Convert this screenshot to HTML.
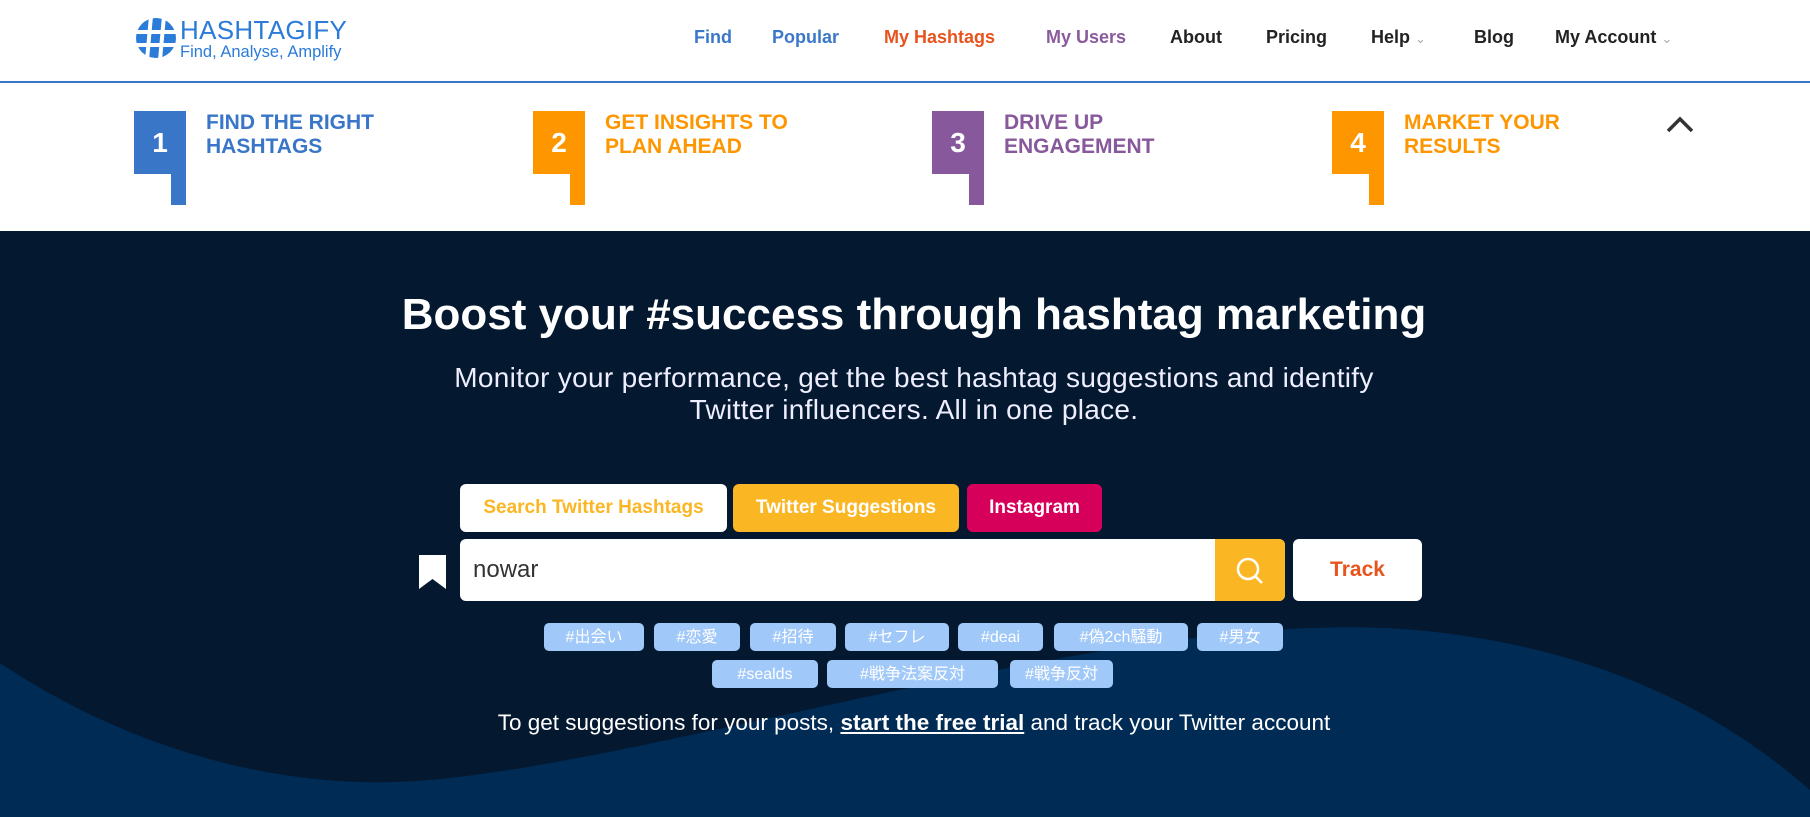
<!DOCTYPE html>
<html><head><meta charset="utf-8"><style>
*{margin:0;padding:0;box-sizing:border-box}
body{width:1810px;height:817px;overflow:hidden;font-family:"Liberation Sans","Noto Sans CJK JP",sans-serif;background:#fff;position:relative}
.a{position:absolute}
.nav{top:27px;font-size:18px;font-weight:bold;color:#222;white-space:nowrap}
.hdr{top:0;left:0;width:1810px;height:83px;border-bottom:2px solid #3a76c8}
.step{top:111px;width:52px;height:63px;color:#fff;font-weight:bold;font-size:28px;text-align:center;line-height:63px}
.tail{top:174px;width:15px;height:31px}
.st{top:111px;font-size:21px;font-weight:bold;line-height:24px}
.hero{top:231px;left:0;width:1810px;height:586px;background:#04182f;overflow:hidden}
.tag{height:28px;background:#a0c8f8;border-radius:5px;color:#fff;font-size:16px;line-height:29px;text-align:center}
</style></head><body>
<div class="a hdr"></div>
<svg class="a" style="left:134px;top:16px" width="44" height="44" viewBox="0 0 44 44">
<circle cx="22" cy="22" r="20" fill="#2b7bd8"/>
<g stroke="#fff" stroke-width="4"><line x1="17" y1="0" x2="13" y2="44"/><line x1="30" y1="0" x2="26" y2="44"/><line x1="0" y1="16" x2="44" y2="16"/><line x1="0" y1="29" x2="44" y2="29"/></g></svg>
<div class="a" style="left:180px;top:15px;font-size:26px;color:#2b7bd8;letter-spacing:0.3px">HASHTAGIFY</div>
<div class="a" style="left:180px;top:43px;font-size:16.5px;color:#2b7bd8">Find, Analyse, Amplify</div>
<div class="a nav" style="left:694px;color:#3b78c9">Find</div>
<div class="a nav" style="left:772px;color:#3b78c9">Popular</div>
<div class="a nav" style="left:884px;color:#e8541e">My Hashtags</div>
<div class="a nav" style="left:1046px;color:#8a5a9c">My Users</div>
<div class="a nav" style="left:1170px">About</div>
<div class="a nav" style="left:1266px">Pricing</div>
<div class="a nav" style="left:1371px">Help <span style="color:#aaa;font-weight:normal;font-size:13px">&#8964;</span></div>
<div class="a nav" style="left:1474px">Blog</div>
<div class="a nav" style="left:1555px">My Account <span style="color:#aaa;font-weight:normal;font-size:13px">&#8964;</span></div>

<div class="a step" style="left:134px;background:#3a76c8">1</div><div class="a tail" style="left:171px;background:#3a76c8"></div>
<div class="a st" style="left:206px;color:#3a76c8">FIND THE RIGHT<br>HASHTAGS</div>
<div class="a step" style="left:533px;background:#fe9600">2</div><div class="a tail" style="left:570px;background:#fe9600"></div>
<div class="a st" style="left:605px;color:#fe9600">GET INSIGHTS TO<br>PLAN AHEAD</div>
<div class="a step" style="left:932px;background:#87589b">3</div><div class="a tail" style="left:969px;background:#87589b"></div>
<div class="a st" style="left:1004px;color:#87589b">DRIVE UP<br>ENGAGEMENT</div>
<div class="a step" style="left:1332px;background:#fe9600">4</div><div class="a tail" style="left:1369px;background:#fe9600"></div>
<div class="a st" style="left:1404px;color:#fe9600">MARKET YOUR<br>RESULTS</div>
<svg class="a" style="left:1665px;top:115px" width="30" height="20"><polyline points="3,16 15,4 27,16" fill="none" stroke="#333" stroke-width="3.5"/></svg>

<div class="a hero">
<svg class="a" style="left:0;top:-231px" width="1810" height="817"><path d="M0,663 C130,750 280,790 416,781 C650,765 1100,615 1386,628 C1600,640 1730,720 1810,790 V817 H0Z" fill="#002b55"/></svg>
</div>
<div class="a" style="left:9px;top:290px;width:1810px;text-align:center;color:#fff;font-size:44px;font-weight:bold">Boost your #success through hashtag marketing</div>
<div class="a" style="left:9px;top:362px;width:1810px;text-align:center;color:#eef;font-size:28px;line-height:32px;letter-spacing:0.3px">Monitor your performance, get the best hashtag suggestions and identify<br>Twitter influencers. All in one place.</div>

<div class="a" style="left:460px;top:484px;width:267px;height:48px;background:#fff;border-radius:6px;color:#fbb624;font-weight:bold;font-size:19px;text-align:center;line-height:48px">Search Twitter Hashtags</div>
<div class="a" style="left:733px;top:484px;width:226px;height:48px;background:#fbb624;border-radius:6px;color:#fff;font-weight:bold;font-size:19px;text-align:center;line-height:48px">Twitter Suggestions</div>
<div class="a" style="left:967px;top:484px;width:135px;height:48px;background:#d6005a;border-radius:6px;color:#fff;font-weight:bold;font-size:19px;text-align:center;line-height:48px">Instagram</div>

<svg class="a" style="left:419px;top:555px" width="27" height="34"><path d="M0,0 H27 V34 L13.5,24 L0,34Z" fill="#fff"/></svg>
<div class="a" style="left:460px;top:539px;width:825px;height:62px;background:#fff;border-radius:6px;overflow:hidden">
<div class="a" style="left:13px;top:17px;font-size:24px;color:#333">nowar</div>
<div class="a" style="left:755px;top:0;width:70px;height:62px;background:#fbb624"></div>
<svg class="a" style="left:775px;top:17px" width="30" height="30"><circle cx="13" cy="13" r="10" fill="none" stroke="#fff" stroke-width="2.5"/><line x1="20" y1="20" x2="27" y2="27" stroke="#fff" stroke-width="2.5"/></svg>
</div>
<div class="a" style="left:1293px;top:539px;width:129px;height:62px;background:#fff;border-radius:6px;color:#e8541e;font-weight:bold;font-size:21px;text-align:center;line-height:62px">Track</div>

<div class="a tag" style="left:544px;top:623px;width:100px">#出会い</div>
<div class="a tag" style="left:654px;top:623px;width:86px">#恋愛</div>
<div class="a tag" style="left:750px;top:623px;width:86px">#招待</div>
<div class="a tag" style="left:845px;top:623px;width:104px">#セフレ</div>
<div class="a tag" style="left:958px;top:623px;width:85px">#deai</div>
<div class="a tag" style="left:1054px;top:623px;width:134px">#偽2ch騒動</div>
<div class="a tag" style="left:1197px;top:623px;width:86px">#男女</div>
<div class="a tag" style="left:712px;top:660px;width:106px">#sealds</div>
<div class="a tag" style="left:827px;top:660px;width:171px">#戦争法案反対</div>
<div class="a tag" style="left:1010px;top:660px;width:103px">#戦争反対</div>

<div class="a" style="left:9px;top:710px;width:1810px;text-align:center;color:#fff;font-size:22.5px">To get suggestions for your posts, <b style="text-decoration:underline">start the free trial</b> and track your Twitter account</div>
</body></html>
